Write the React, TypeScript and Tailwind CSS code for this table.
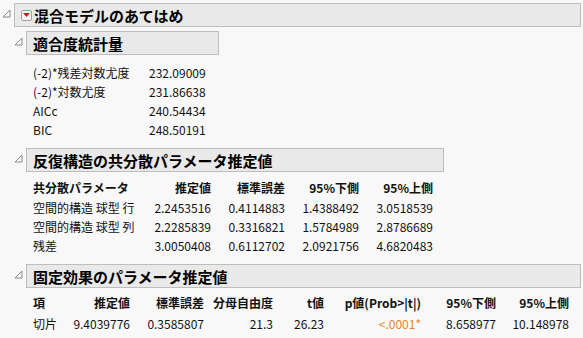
import React from "react";

const font = { fontFamily: '"Noto Sans CJK JP", "Noto Sans", sans-serif' };

function Disclosure() {
  return (
    <svg width="9" height="9" viewBox="0 0 9 9" className="shrink-0">
      <path d="M8 1 L8 8 L1 8 Z" fill="none" stroke="#8a8a8a" strokeWidth="1" />
    </svg>
  );
}

function RedMenu() {
  return (
    <div className="w-[11px] h-[11px] rounded-[2px] border border-[#a0a0a0] bg-[#f4f4f4] flex items-center justify-center mr-[2px]">
      <svg width="7" height="4" viewBox="0 0 7 4">
        <path d="M0 0 L7 0 L3.5 4 Z" fill="#d01818" />
      </svg>
    </div>
  );
}

function Header({ title, width, menu }: { title: string; width?: string; menu?: boolean }) {
  return (
    <div className="flex items-center">
      <div className="w-[12px] flex justify-start -mt-[3px]">
        <Disclosure />
      </div>
      <div
        className={`h-[24px] border border-[#bdbdbd] bg-[#e9e9e9] flex items-center pl-[6px] ${width ?? "flex-1"}`}
      >
        {menu && <RedMenu />}
        <span className="text-[15px] font-bold text-black leading-none">{title}</span>
      </div>
    </div>
  );
}

const fit = [
  ["(-2)*残差対数尤度", "232.09009"],
  ["(-2)*対数尤度", "231.86638"],
  ["AICc", "240.54434"],
  ["BIC", "248.50191"],
];

const cov = [
  ["空間的構造 球型 行", "2.2453516", "0.4114883", "1.4388492", "3.0518539"],
  ["空間的構造 球型 列", "2.2285839", "0.3316821", "1.5784989", "2.8786689"],
  ["残差", "3.0050408", "0.6112702", "2.0921756", "4.6820483"],
];

export default function App() {
  return (
    <div style={font} className="w-[583px] h-[338px] overflow-hidden bg-[#f8f8f8] text-[#111] pt-[3px] pl-[2px] pr-[2px]">
      <Header title="混合モデルのあてはめ" menu />

      <div className="pl-[12px] mt-[4px]">
        <Header title="適合度統計量" width="w-[193px]" />
        <div className="pl-[19px] pt-[8px] text-[12px]">
          {fit.map(([k, v]) => (
            <div key={k} className="grid grid-cols-[116px_80px] h-[19px] items-center">
              <span>{k}</span>
              <span>{v}</span>
            </div>
          ))}
        </div>

        <div className="mt-[9px]">
          <Header title="反復構造の共分散パラメータ推定値" width="w-[418px]" />
        </div>
        <div className="pl-[19px] pt-[6px] text-[12px]">
          <div className="grid grid-cols-[118px_60px_74px_74px_74px] h-[20px] items-center font-bold">
            <span>共分散パラメータ</span>
            <span className="text-right">推定値</span>
            <span className="text-right">標準誤差</span>
            <span className="text-right">95%下側</span>
            <span className="text-right">95%上側</span>
          </div>
          {cov.map((r) => (
            <div key={r[0]} className="grid grid-cols-[118px_60px_74px_74px_74px] h-[19px] items-center">
              <span>{r[0]}</span>
              <span className="text-right">{r[1]}</span>
              <span className="text-right">{r[2]}</span>
              <span className="text-right">{r[3]}</span>
              <span className="text-right">{r[4]}</span>
            </div>
          ))}
        </div>

        <div className="mt-[9px]">
          <Header title="固定効果のパラメータ推定値" />
        </div>
        <div className="pl-[19px] pt-[5px] text-[12px]">
          <div className="grid grid-cols-[30px_67px_74px_69px_51px_97px_75px_73px] h-[20px] items-center font-bold">
            <span>項</span>
            <span className="text-right">推定値</span>
            <span className="text-right">標準誤差</span>
            <span className="text-right">分母自由度</span>
            <span className="text-right">t値</span>
            <span className="text-right">p値(Prob&gt;|t|)</span>
            <span className="text-right">95%下側</span>
            <span className="text-right">95%上側</span>
          </div>
          <div className="grid grid-cols-[30px_67px_74px_69px_51px_97px_75px_73px] h-[21px] items-center">
            <span>切片</span>
            <span className="text-right">9.4039776</span>
            <span className="text-right">0.3585807</span>
            <span className="text-right">21.3</span>
            <span className="text-right">26.23</span>
            <span className="text-right text-[#e8822e]">&lt;.0001*</span>
            <span className="text-right">8.658977</span>
            <span className="text-right">10.148978</span>
          </div>
        </div>
      </div>
    </div>
  );
}
